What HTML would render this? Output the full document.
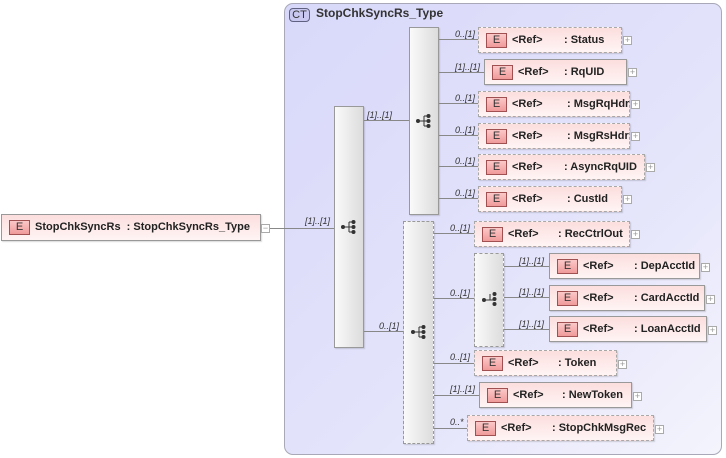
<!DOCTYPE html>
<html><head><meta charset="utf-8"><style>
*{margin:0;padding:0;box-sizing:border-box}
body{width:726px;height:458px;background:#fff;position:relative;overflow:hidden;font-family:"Liberation Sans",Arial,sans-serif}
.a{position:absolute}
.ct{left:284px;top:3px;width:438px;height:452px;border:1px solid #a8a8b8;border-radius:9px;background:linear-gradient(135deg,#d8d8fa 0%,#e4e4fb 60%,#f4f4fd 100%)}
.ctb{left:289px;top:8px;width:21px;height:14px;border:1px solid #606080;border-radius:4px;background:#c8c8f0;font-size:11px;color:#333;text-align:center;line-height:12px}
.ctt{left:316px;top:6px;font-size:12px;font-weight:bold;color:#333}
.grp{border:1px solid #999;background:linear-gradient(90deg,#fafafa,#dcdcdc);box-shadow:1px 1px 1px rgba(0,0,0,.15)}
.dash{border:1px dashed #999}
.el{height:26px;border:1px solid #999;background:linear-gradient(180deg,#fcdede,#fff4f4);box-shadow:1px 1px 1px rgba(0,0,0,.15);font-size:11px;font-weight:bold;color:#222}
.el.d{border:1px dashed #a8a8a8}
.el .e{position:absolute;left:7px;top:5px;width:21px;height:15px;border:1px solid #a05050;background:linear-gradient(180deg,#fcc8c8,#f09a9a);font-size:11px;font-weight:normal;text-align:center;line-height:13px;color:#333}
.el .r{position:absolute;left:33px;top:6px}
.el .n{position:absolute;top:6px;white-space:nowrap}
.pl{width:9px;height:9px;border:1px solid #aaa;background:#fff;font-size:9px;line-height:7px;text-align:center;color:#999}
.ln{background:#888;height:1px}
.vl{background:#888;width:1px}
.lb{font-size:9px;font-style:italic;color:#333}
</style></head><body>
<div class="a ct"></div>
<div class="a ctb">CT</div>
<div class="a ctt">StopChkSyncRs_Type</div>

<div class="a el" style="left:1px;top:214px;width:260px;height:27px;"><div class="e">E</div><div class="n" style="left:33px">StopChkSyncRs&nbsp; : StopChkSyncRs_Type</div></div>
<div class="a pl" style="left:261px;top:224px">−</div>
<div class="a ln" style="left:270px;top:228px;width:64px"></div>
<div class="a lb" style="left:305px;top:216px">[1]..[1]</div>

<div class="a grp" style="left:334px;top:106px;width:30px;height:242px"></div>
<svg class="a" style="left:341px;top:219px" width="16" height="15"><circle cx="2" cy="8" r="2" fill="#333"/><line x1="2" y1="8" x2="8" y2="8" stroke="#333"/><line x1="8" y1="3" x2="8" y2="13" stroke="#333"/><line x1="8" y1="3" x2="12" y2="3" stroke="#333"/><line x1="8" y1="13" x2="12" y2="13" stroke="#333"/><line x1="8" y1="8" x2="12" y2="8" stroke="#333"/><circle cx="12.5" cy="3" r="2" fill="#333"/><circle cx="12.5" cy="8" r="2" fill="#333"/><circle cx="12.5" cy="13" r="2" fill="#333"/></svg>

<div class="a ln" style="left:364px;top:120px;width:45px"></div>
<div class="a lb" style="left:367px;top:110px">[1]..[1]</div>
<div class="a ln" style="left:364px;top:331px;width:39px"></div>
<div class="a lb" style="left:379px;top:321px">0..[1]</div>

<div class="a grp" style="left:409px;top:27px;width:30px;height:188px"></div>
<svg class="a" style="left:416px;top:113px" width="16" height="15"><circle cx="2" cy="8" r="2" fill="#333"/><line x1="2" y1="8" x2="8" y2="8" stroke="#333"/><line x1="8" y1="3" x2="8" y2="13" stroke="#333"/><line x1="8" y1="3" x2="12" y2="3" stroke="#333"/><line x1="8" y1="13" x2="12" y2="13" stroke="#333"/><line x1="8" y1="8" x2="12" y2="8" stroke="#333"/><circle cx="12.5" cy="3" r="2" fill="#333"/><circle cx="12.5" cy="8" r="2" fill="#333"/><circle cx="12.5" cy="13" r="2" fill="#333"/></svg>

<div class="a grp dash" style="left:403px;top:221px;width:31px;height:223px"></div>
<svg class="a" style="left:411px;top:324px" width="16" height="15"><circle cx="2" cy="8" r="2" fill="#333"/><line x1="2" y1="8" x2="8" y2="8" stroke="#333"/><line x1="8" y1="3" x2="8" y2="13" stroke="#333"/><line x1="8" y1="3" x2="12" y2="3" stroke="#333"/><line x1="8" y1="13" x2="12" y2="13" stroke="#333"/><line x1="8" y1="8" x2="12" y2="8" stroke="#333"/><circle cx="12.5" cy="3" r="2" fill="#333"/><circle cx="12.5" cy="8" r="2" fill="#333"/><circle cx="12.5" cy="13" r="2" fill="#333"/></svg>

<div class="a grp dash" style="left:474px;top:253px;width:30px;height:94px"></div>
<svg class="a" style="left:482px;top:291px" width="16" height="15"><circle cx="2" cy="9" r="2" fill="#333"/><line x1="2" y1="9" x2="8" y2="9" stroke="#333"/><line x1="8" y1="3" x2="8" y2="9" stroke="#333"/><line x1="8" y1="9" x2="12" y2="9" stroke="#333"/><circle cx="12.5" cy="3" r="2" fill="#333"/><circle cx="12.5" cy="8" r="2" fill="#333"/><circle cx="12.5" cy="13" r="2" fill="#333"/></svg>
<div class="a ln" style="left:434px;top:298px;width:40px"></div>
<div class="a lb" style="left:450px;top:288px">0..[1]</div>

<div class="a ln" style="left:439px;top:39px;width:39px"></div><div class="a lb" style="left:455px;top:29px">0..[1]</div>
<div class="a el d" style="left:478px;top:27px;width:144px"><div class="e">E</div><div class="r">&lt;Ref&gt;</div><div class="n" style="left:85px">: Status</div></div>
<div class="a pl" style="left:623px;top:36px">+</div>

<div class="a ln" style="left:439px;top:72px;width:45px"></div><div class="a lb" style="left:455px;top:62px">[1]..[1]</div>
<div class="a el" style="left:484px;top:59px;width:143px"><div class="e">E</div><div class="r">&lt;Ref&gt;</div><div class="n" style="left:79px">: RqUID</div></div>
<div class="a pl" style="left:628px;top:68px">+</div>

<div class="a ln" style="left:439px;top:103px;width:39px"></div><div class="a lb" style="left:455px;top:93px">0..[1]</div>
<div class="a el d" style="left:478px;top:91px;width:152px"><div class="e">E</div><div class="r">&lt;Ref&gt;</div><div class="n" style="left:88px">: MsgRqHdr</div></div>
<div class="a pl" style="left:631px;top:100px">+</div>

<div class="a ln" style="left:439px;top:135px;width:39px"></div><div class="a lb" style="left:455px;top:125px">0..[1]</div>
<div class="a el d" style="left:478px;top:123px;width:152px"><div class="e">E</div><div class="r">&lt;Ref&gt;</div><div class="n" style="left:88px">: MsgRsHdr</div></div>
<div class="a pl" style="left:631px;top:132px">+</div>

<div class="a ln" style="left:439px;top:166px;width:39px"></div><div class="a lb" style="left:455px;top:156px">0..[1]</div>
<div class="a el d" style="left:478px;top:154px;width:167px"><div class="e">E</div><div class="r">&lt;Ref&gt;</div><div class="n" style="left:85px">: AsyncRqUID</div></div>
<div class="a pl" style="left:646px;top:163px">+</div>

<div class="a ln" style="left:439px;top:198px;width:39px"></div><div class="a lb" style="left:455px;top:188px">0..[1]</div>
<div class="a el d" style="left:478px;top:186px;width:144px"><div class="e">E</div><div class="r">&lt;Ref&gt;</div><div class="n" style="left:88px">: CustId</div></div>
<div class="a pl" style="left:623px;top:195px">+</div>

<div class="a ln" style="left:434px;top:233px;width:40px"></div><div class="a lb" style="left:450px;top:223px">0..[1]</div>
<div class="a el d" style="left:474px;top:221px;width:156px"><div class="e">E</div><div class="r">&lt;Ref&gt;</div><div class="n" style="left:83px">: RecCtrlOut</div></div>
<div class="a pl" style="left:631px;top:230px">+</div>

<div class="a ln" style="left:504px;top:266px;width:45px"></div><div class="a lb" style="left:519px;top:256px">[1]..[1]</div>
<div class="a el" style="left:549px;top:253px;width:151px"><div class="e">E</div><div class="r">&lt;Ref&gt;</div><div class="n" style="left:84px">: DepAcctId</div></div>
<div class="a pl" style="left:701px;top:263px">+</div>

<div class="a ln" style="left:504px;top:297px;width:45px"></div><div class="a lb" style="left:519px;top:287px">[1]..[1]</div>
<div class="a el" style="left:549px;top:285px;width:156px"><div class="e">E</div><div class="r">&lt;Ref&gt;</div><div class="n" style="left:84px">: CardAcctId</div></div>
<div class="a pl" style="left:706px;top:295px">+</div>

<div class="a ln" style="left:504px;top:329px;width:45px"></div><div class="a lb" style="left:519px;top:319px">[1]..[1]</div>
<div class="a el" style="left:549px;top:316px;width:158px"><div class="e">E</div><div class="r">&lt;Ref&gt;</div><div class="n" style="left:84px">: LoanAcctId</div></div>
<div class="a pl" style="left:708px;top:326px">+</div>

<div class="a ln" style="left:434px;top:363px;width:40px"></div><div class="a lb" style="left:450px;top:352px">0..[1]</div>
<div class="a el d" style="left:474px;top:350px;width:143px"><div class="e">E</div><div class="r">&lt;Ref&gt;</div><div class="n" style="left:83px">: Token</div></div>
<div class="a pl" style="left:618px;top:360px">+</div>

<div class="a ln" style="left:434px;top:395px;width:45px"></div><div class="a lb" style="left:450px;top:384px">[1]..[1]</div>
<div class="a el" style="left:479px;top:382px;width:153px"><div class="e">E</div><div class="r">&lt;Ref&gt;</div><div class="n" style="left:82px">: NewToken</div></div>
<div class="a pl" style="left:633px;top:392px">+</div>

<div class="a ln" style="left:434px;top:428px;width:33px"></div><div class="a lb" style="left:450px;top:417px">0..*</div>
<div class="a el d" style="left:467px;top:415px;width:187px"><div class="e">E</div><div class="r">&lt;Ref&gt;</div><div class="n" style="left:84px">: StopChkMsgRec</div></div>
<div class="a pl" style="left:655px;top:425px">+</div>
</body></html>
